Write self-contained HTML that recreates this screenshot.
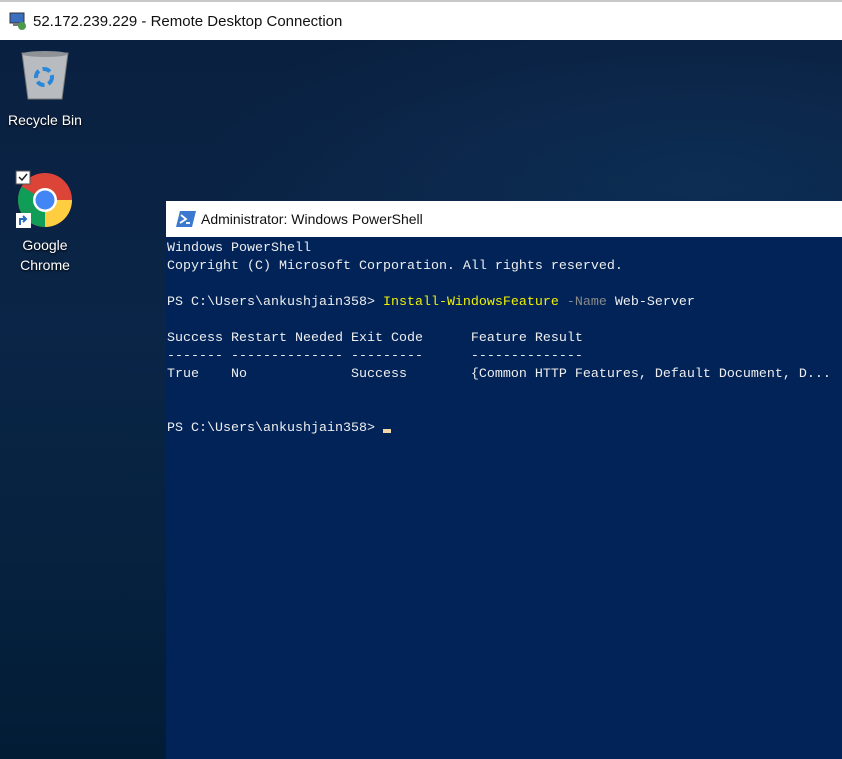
<!DOCTYPE html>
<html><head><meta charset="utf-8"><style>
body{margin:0;width:842px;height:759px;overflow:hidden;position:relative;font-family:"Segoe UI","Liberation Sans",sans-serif;background:#0a2445}
.top{position:absolute;left:0;top:0;width:842px;height:40px;background:#fff;border-top:2px solid #c8c8c8;box-sizing:border-box}
.top span{position:absolute;left:33px;top:11px;font-size:15px;color:#111}
.desk{position:absolute;left:0;top:40px;width:842px;height:719px;background:
radial-gradient(ellipse 500px 200px at 700px 140px,rgba(20,70,120,.3),transparent),
linear-gradient(180deg,#0a2040 0%,#0a2547 40%,#06223f 70%,#031c36 100%)}
.lbl{position:absolute;color:#fff;font-size:14px;text-align:center;text-shadow:0 1px 2px #000;width:90px}
.ps{position:absolute;left:166px;top:201px;width:676px;height:558px;background:#012357}
.pst{height:36px;background:#fff;position:relative}
.pst span{position:absolute;left:35px;top:10px;font-size:14px;color:#111}
pre{margin:0;position:absolute;left:1px;top:39px;font-family:"Liberation Mono",monospace;font-size:13.33px;line-height:18px;color:#eee}
.y{color:#f0f000}.g{color:#8a8a8a}
.cur{display:inline-block;width:8px;height:4px;background:#f2d8a8;vertical-align:-2px}
</style></head><body>
<div class="top">
<svg style="position:absolute;left:8px;top:9px" width="20" height="20"><rect x="2" y="2" width="14" height="10" fill="#3a6fc0" stroke="#333"/><rect x="5" y="12" width="8" height="3" fill="#777"/><circle cx="14" cy="15" r="4" fill="#4a9a4a"/></svg>
<span>52.172.239.229 - Remote Desktop Connection</span></div>
<div class="desk">
<svg style="position:absolute;left:21px;top:10px" width="48" height="52"><path d="M1 3 L47 3 L41 49 L7 49 Z" fill="#b8bcc0" stroke="#777"/><ellipse cx="24" cy="4" rx="23" ry="3" fill="#8e9296"/><circle cx="23" cy="27" r="8" fill="none" stroke="#2a86d8" stroke-width="4" stroke-dasharray="8 4"/></svg>
<div class="lbl" style="left:0;top:72px">Recycle Bin</div>
<svg style="position:absolute;left:15px;top:129px" width="60" height="62"><circle cx="30" cy="31" r="27" fill="#db4437"/><path d="M30 31 L6.6 44.5 A27 27 0 0 1 6.6 17.5 Z" fill="#0f9d58"/><path d="M30 31 L6.6 44.5 A27 27 0 0 0 40 56 Z" fill="#0f9d58"/><path d="M30 31 L57 31 A27 27 0 0 1 30 58 L30 31Z" fill="#ffcd40"/><circle cx="30" cy="31" r="12" fill="#fff"/><circle cx="30" cy="31" r="9.5" fill="#4285f4"/><rect x="1" y="2" width="14" height="13" fill="#fff" stroke="#555"/><path d="M4 8 L7 11 L12 5" stroke="#222" fill="none" stroke-width="1.5"/><rect x="1" y="44" width="15" height="15" fill="#fff"/><path d="M5 56 L5 50 L11 50 M8 47 L11 50 L8 53" stroke="#2a6ac0" stroke-width="2" fill="none"/></svg>
<div class="lbl" style="left:0;top:195px;line-height:20px">Google<br>Chrome</div>
</div>
<div class="ps">
<div class="pst"><svg style="position:absolute;left:10px;top:10px" width="20" height="16"><path d="M4 0 H20 L16 16 H0 Z" fill="#3b78d0"/><path d="M5 4 L10 8 L4 12" stroke="#fff" stroke-width="1.8" fill="none"/><path d="M10 12 H14" stroke="#fff" stroke-width="1.8"/></svg><span>Administrator: Windows PowerShell</span></div>
<pre>Windows PowerShell
Copyright (C) Microsoft Corporation. All rights reserved.

PS C:\Users\ankushjain358&gt; <span class="y">Install-WindowsFeature</span> <span class="g">-Name</span> Web-Server

Success Restart Needed Exit Code      Feature Result
------- -------------- ---------      --------------
True    No             Success        {Common HTTP Features, Default Document, D...


PS C:\Users\ankushjain358&gt; <span class="cur"></span></pre>
</div>
</body></html>
